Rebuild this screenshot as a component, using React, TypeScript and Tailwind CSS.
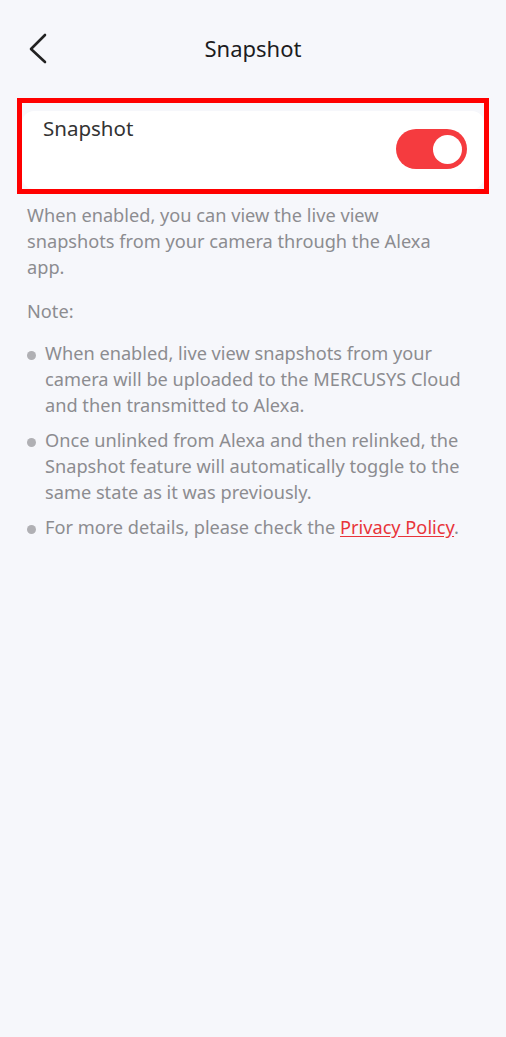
const notes = [
  "When enabled, live view snapshots from your camera will be uploaded to the MERCUSYS Cloud and then transmitted to Alexa.",
  "Once unlinked from Alexa and then relinked, the Snapshot feature will automatically toggle to the same state as it was previously.",
];

export default function App() {
  return (
    <div
      className="min-h-[1037px] w-full bg-[#f6f7fb] text-[#222]"
      style={{ fontFamily: "'Noto Sans', Roboto, sans-serif" }}
    >
      {/* Header */}
      <div className="relative flex h-[98px] items-start justify-center pt-[29px]">
        <button className="absolute left-[26px] top-[32px] text-[#222]">
          <svg width="24" height="34" viewBox="0 0 24 34" fill="none">
            <polyline
              points="19,3 5,17 19,30"
              stroke="currentColor"
              strokeWidth="2.6"
              strokeLinecap="round"
              strokeLinejoin="round"
            />
          </svg>
        </button>
        <div className="text-[22px] leading-[38px] text-[#1c1c1e]">Snapshot</div>
      </div>

      {/* Highlighted setting card */}
      <div className="mx-[17px] border-[5px] border-[#ff0000] pt-[8px]">
        <div className="flex h-[78px] justify-between rounded-[12px] bg-white pl-[21px] pr-[17px]">
          <div className="pt-[3px] text-[20.5px] leading-[28px] text-[#333]">Snapshot</div>
          <div className="mt-[18px] flex h-[40px] w-[71px] items-center justify-end rounded-full bg-[#f53b3f] pr-[5px]">
            <div className="h-[29px] w-[29px] rounded-full bg-white" />
          </div>
        </div>
      </div>

      {/* Description */}
      <div className="px-[27px] pt-[8px] text-[18.2px] leading-[26px] text-[#8c8c90]">
        <p className="max-w-[435px]">
          When enabled, you can view the live view snapshots from your camera
          through the Alexa app.
        </p>
        <p className="mt-[18px]">Note:</p>
        <ul className="mt-[16px] flex flex-col gap-[9px]">
          {notes.map((n) => (
            <li key={n} className="flex gap-[9px]">
              <span className="mt-[11px] h-[9px] w-[9px] shrink-0 rounded-full bg-[#b0b0b4]" />
              <span>{n}</span>
            </li>
          ))}
          <li className="flex gap-[9px]">
            <span className="mt-[11px] h-[9px] w-[9px] shrink-0 rounded-full bg-[#b0b0b4]" />
            <span>
              For more details, please check the{" "}
              <span className="text-[#e8343a] underline underline-offset-2">Privacy Policy</span>.
            </span>
          </li>
        </ul>
      </div>
    </div>
  );
}
